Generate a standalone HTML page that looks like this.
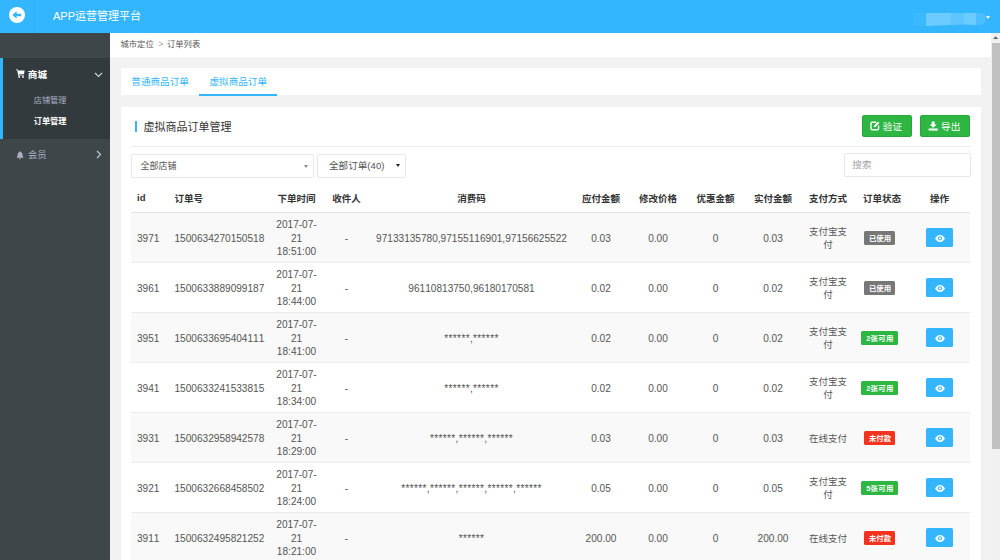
<!DOCTYPE html>
<html lang="zh-CN">
<head>
<meta charset="utf-8">
<title>APP运营管理平台</title>
<style>
*{box-sizing:border-box;margin:0;padding:0}
html,body{width:1000px;height:560px;overflow:hidden}
body{position:relative;background:#f2f2f2;font-family:"Liberation Sans","Noto Sans CJK SC",sans-serif;color:#333;font-size:10px}
.abs{position:absolute}
/* header */
#hdr{left:0;top:0;width:1000px;height:33px;background:#34b6ff}
#hdr .back{left:0;top:0;width:35px;height:33px;border-right:1px solid #30aff7}
#hdr .circle{left:9px;top:6.6px;width:16px;height:16px;border-radius:50%;background:#fff}
#hdr .title{left:53px;top:6px;font-size:11px;line-height:20px;color:#fff;white-space:nowrap}
#hdr .user{left:913px;top:12.5px;width:73px;height:13px}
#hdr .caret{left:986.3px;top:15.6px;width:0;height:0;border-left:2.5px solid transparent;border-right:2.5px solid transparent;border-top:3px solid #fff}
/* sidebar */
#side{left:0;top:33px;width:110px;height:527px;background:#3e4649}
#side .active{left:0;top:25px;width:110px;height:81px;background:#333a3d;border-left:3px solid #34b6ff}
#side .t{white-space:nowrap;line-height:12px}
/* breadcrumb */
#crumb{left:110px;top:33px;width:881px;height:24px;background:#fff;font-size:8.3px;line-height:22.6px;color:#555;white-space:nowrap}
/* tabs */
#tabs{left:121px;top:68px;width:860px;height:27px;background:#fff}
#tabs .tab{top:0;height:27px;line-height:27px;font-size:9.6px;color:#34b6ff;white-space:nowrap}
#tabs .ul{left:78px;top:26px;width:78px;height:2px;background:#34b6ff}
/* card */
#card{left:121px;top:107px;width:860px;height:460px;background:#fff}
.btn-g{top:8px;height:22px;background:#2db742;border:1px solid #28a53b;border-radius:2px;color:#fff;font-size:9.6px;line-height:21px;white-space:nowrap}
.sel{top:47px;height:24px;border:1px solid #e7e7e7;border-radius:2px;background:#fff;font-size:9px;line-height:22px;color:#555;white-space:nowrap}
/* table */
table{position:absolute;left:10px;top:81px;width:839px;border-collapse:collapse;table-layout:fixed;font-size:10.1px}
th{height:24px;padding:0 0 3.6px 0;font-weight:bold;font-size:9.5px;color:#333;text-align:center;border-bottom:1px solid #e3e3e3;white-space:nowrap;vertical-align:middle}
td{font-kerning:none;height:50px;text-align:center;vertical-align:middle;line-height:13.3px;color:#555;border-bottom:1px solid #ececec;padding:2.8px 0 0 0}
tbody tr:nth-child(odd) td{background:#f9f9f9}
th.l{text-align:left;padding-left:6px}td.l{text-align:left;padding-left:6px}
td.cn{font-size:9.5px}
td.st{letter-spacing:0.34px;padding-top:3.8px}
.bdg{display:inline-block;height:14px;line-height:16px;padding:0 4.2px 0 5.2px;top:-0.4px;overflow:hidden;border-radius:1.5px;color:#fff;font-weight:bold;font-size:7.4px;vertical-align:middle;position:relative;left:-2.5px;white-space:nowrap}
.g{background:#777}.gr{background:#2db742;letter-spacing:0.35px;padding-right:4.4px;padding-left:5.4px}.rd{background:#f5321e}
.eye{display:inline-block;width:27px;height:19px;background:#34b6ff;border-radius:1.5px;vertical-align:middle;position:relative;top:-1px;left:0px}
.eye svg{position:absolute;left:8.5px;top:6.8px}
/* scrollbar */
#sb{left:991px;top:33px;width:9px;height:527px;background:#f1f1f1}
#sb .thumb{left:1px;top:10px;width:8px;height:406px;background:#c1c1c1}
</style>
</head>
<body>
<div id="hdr" class="abs">
  <div class="back abs"></div>
  <div class="circle abs"><svg width="16" height="16" viewBox="0 0 16 16" style="display:block"><path d="M3.4 8 L7.6 4.2 L7.6 6.7 L12.2 6.7 L12.2 9.3 L7.6 9.3 L7.6 11.8 Z" fill="#34b6ff"/></svg></div>
  <div class="title abs">APP运营管理平台</div>
  <svg class="user abs" width="73" height="13" viewBox="0 0 73 13"><path d="M0 0 H13 V13 H0 Z" fill="#3bb9ff"/><path d="M13 0 H38 V12 L13 13 Z" fill="#6ccbff"/><path d="M38 0 H50.5 V11.5 L38 12 Z" fill="#5ec5ff"/><path d="M50.5 0 H63 V12 L50.5 11.5 Z" fill="#6ccbff"/><path d="M63 0 H68 Q73 0 73 5 Q73 12 66 12 H63 Z" fill="#4abeff"/></svg>
  <div class="caret abs"></div>
</div>

<div id="side" class="abs">
  <div class="active abs"></div>
  <svg class="abs" style="left:16px;top:36.4px" width="9" height="9" viewBox="0 0 9 9"><path d="M0 0.3 L1.6 0.6 L2.2 1.6 L8.6 1.6 L8 5.2 L2.6 5.6 L2.8 6.4 L8 6.4 L8 7 L2.2 7 L1.2 1.2 L0 1 Z" fill="#fff"/><circle cx="3.2" cy="8" r="0.9" fill="#fff"/><circle cx="7" cy="8" r="0.9" fill="#fff"/></svg>
  <div class="t abs" style="left:27.8px;top:35.7px;font-size:9.6px;font-weight:bold;color:#fff">商城</div>
  <svg class="abs" style="left:94px;top:39px" width="9" height="6" viewBox="0 0 9 6"><path d="M1 1 L4.5 4.5 L8 1" stroke="#d0d4d8" stroke-width="1.1" fill="none"/></svg>
  <div class="t abs" style="left:33.7px;top:62px;font-size:8.2px;color:#aab2c4">店铺管理</div>
  <div class="t abs" style="left:33.7px;top:83px;font-size:8.2px;font-weight:bold;color:#fff">订单管理</div>
  <svg class="abs" style="left:16.4px;top:117.6px" width="8.2" height="9.1" viewBox="0 0 9 10"><path d="M4.5 0.3 C5 0.3 5.2 0.7 5.1 1.1 C6.6 1.5 7.2 2.8 7.2 4.2 C7.2 5.8 7.8 6.8 8.6 7.4 L0.4 7.4 C1.2 6.8 1.8 5.8 1.8 4.2 C1.8 2.8 2.4 1.5 3.9 1.1 C3.8 0.7 4 0.3 4.5 0.3 Z M3.4 8 L5.6 8 C5.6 8.7 5.1 9.2 4.5 9.2 C3.9 9.2 3.4 8.7 3.4 8 Z" fill="#aab2c4"/></svg>
  <div class="t abs" style="left:28px;top:115.5px;font-size:9.3px;color:#aab2c4">会员</div>
  <svg class="abs" style="left:96.1px;top:117.3px" width="6" height="9" viewBox="0 0 6 9"><path d="M1 1 L4.6 4.5 L1 8" stroke="#c4cad4" stroke-width="1.1" fill="none"/></svg>
</div>

<div id="crumb" class="abs"><span class="abs" style="left:10.5px">城市定位</span><span class="abs" style="left:48.5px;color:#999">&gt;</span><span class="abs" style="left:57px">订单列表</span></div>

<div id="tabs" class="abs">
  <div class="tab abs" style="left:10.3px">普通商品订单</div>
  <div class="tab abs" style="left:88.5px">虚拟商品订单</div>
  <div class="ul abs"></div>
</div>

<div id="card" class="abs">
  <div class="abs" style="left:13.5px;top:13.5px;width:2.5px;height:11.5px;background:#34b6ff"></div>
  <div class="abs" style="left:22.5px;top:10px;font-size:11px;line-height:20px;color:#333;white-space:nowrap">虚拟商品订单管理</div>
  <div class="btn-g abs" style="left:741px;width:49.6px">
    <svg class="abs" style="left:7.4px;top:4.8px" width="10" height="10" viewBox="0 0 10 10"><path d="M6.2 1.2 L2.2 1.2 C1.5 1.2 1 1.7 1 2.4 L1 7.6 C1 8.3 1.5 8.8 2.2 8.8 L7.4 8.8 C8.1 8.8 8.6 8.3 8.6 7.6 L8.6 4.6" stroke="#fff" stroke-width="1.4" fill="none"/><path d="M3.8 6.3 L4.2 4.6 L8 0.6 L9.4 1.9 L5.5 5.9 Z" fill="#fff"/></svg>
    <span class="abs" style="left:19.8px">验证</span>
  </div>
  <div class="btn-g abs" style="left:799.3px;width:49.6px">
    <svg class="abs" style="left:6.6px;top:4.7px" width="10.4" height="10.4" viewBox="0 0 10 10"><path d="M3.6 0.5 L6.4 0.5 L6.4 3.4 L8.4 3.4 L5 6.6 L1.6 3.4 L3.6 3.4 Z" fill="#fff"/><rect x="0.6" y="7.2" width="8.8" height="2" fill="#fff"/></svg>
    <span class="abs" style="left:19.8px">导出</span>
  </div>
  <div class="abs" style="left:10px;top:39px;width:839.5px;height:1px;background:#ededed"></div>
  <div class="sel abs" style="left:10px;width:183px"><span class="abs" style="left:8.5px">全部店铺</span><i class="abs" style="left:172px;top:9.8px;border-left:2.3px solid transparent;border-right:2.3px solid transparent;border-top:3px solid #888"></i></div>
  <div class="sel abs" style="left:196px;width:89px"><span class="abs" style="left:11px;font-size:9.6px">全部订单(40)</span><i class="abs" style="left:78px;top:8.6px;border-left:2.1px solid transparent;border-right:2.1px solid transparent;border-top:3.8px solid #222"></i></div>
  <div class="sel abs" style="left:723px;width:126.5px;top:46.4px;height:23.2px"><span class="abs" style="left:7.3px;font-size:9.6px;color:#a5a5a5">搜索</span></div>

  <table>
    <colgroup><col style="width:37.5px"><col style="width:102.5px"><col style="width:51px"><col style="width:49px"><col style="width:201px"><col style="width:58px"><col style="width:56px"><col style="width:59px"><col style="width:56px"><col style="width:54px"><col style="width:54px"><col style="width:61px"></colgroup>
    <thead><tr><th class="l">id</th><th class="l">订单号</th><th>下单时间</th><th>收件人</th><th>消费码</th><th>应付金额</th><th>修改价格</th><th>优惠金额</th><th>实付金额</th><th>支付方式</th><th>订单状态</th><th>操作</th></tr></thead>
    <tbody>
      <tr><td class="l">3971</td><td class="l">1500634270150518</td><td>2017-07-<br>21<br>18:51:00</td><td>-</td><td>97133135780,97155116901,97156625522</td><td>0.03</td><td>0.00</td><td>0</td><td>0.03</td><td class="cn">支付宝支<br>付</td><td><span class="bdg g">已使用</span></td><td><span class="eye"><svg width="10" height="7" viewBox="0 0 10 7"><path d="M0 3.5 C1.5 1 3.2 0 5 0 C6.8 0 8.5 1 10 3.5 C8.5 6 6.8 7 5 7 C3.2 7 1.5 6 0 3.5 Z" fill="#fff"/><circle cx="5" cy="3.3" r="2.1" fill="#34b6ff"/><circle cx="5" cy="3.3" r="1.1" fill="#fff"/></svg></span></td></tr>
      <tr><td class="l">3961</td><td class="l">1500633889099187</td><td>2017-07-<br>21<br>18:44:00</td><td>-</td><td>96110813750,96180170581</td><td>0.02</td><td>0.00</td><td>0</td><td>0.02</td><td class="cn">支付宝支<br>付</td><td><span class="bdg g">已使用</span></td><td><span class="eye"><svg width="10" height="7" viewBox="0 0 10 7"><path d="M0 3.5 C1.5 1 3.2 0 5 0 C6.8 0 8.5 1 10 3.5 C8.5 6 6.8 7 5 7 C3.2 7 1.5 6 0 3.5 Z" fill="#fff"/><circle cx="5" cy="3.3" r="2.1" fill="#34b6ff"/><circle cx="5" cy="3.3" r="1.1" fill="#fff"/></svg></span></td></tr>
      <tr><td class="l">3951</td><td class="l">1500633695404111</td><td>2017-07-<br>21<br>18:41:00</td><td>-</td><td class="st">******,******</td><td>0.02</td><td>0.00</td><td>0</td><td>0.02</td><td class="cn">支付宝支<br>付</td><td><span class="bdg gr">2张可用</span></td><td><span class="eye"><svg width="10" height="7" viewBox="0 0 10 7"><path d="M0 3.5 C1.5 1 3.2 0 5 0 C6.8 0 8.5 1 10 3.5 C8.5 6 6.8 7 5 7 C3.2 7 1.5 6 0 3.5 Z" fill="#fff"/><circle cx="5" cy="3.3" r="2.1" fill="#34b6ff"/><circle cx="5" cy="3.3" r="1.1" fill="#fff"/></svg></span></td></tr>
      <tr><td class="l">3941</td><td class="l">1500633241533815</td><td>2017-07-<br>21<br>18:34:00</td><td>-</td><td class="st">******,******</td><td>0.02</td><td>0.00</td><td>0</td><td>0.02</td><td class="cn">支付宝支<br>付</td><td><span class="bdg gr">2张可用</span></td><td><span class="eye"><svg width="10" height="7" viewBox="0 0 10 7"><path d="M0 3.5 C1.5 1 3.2 0 5 0 C6.8 0 8.5 1 10 3.5 C8.5 6 6.8 7 5 7 C3.2 7 1.5 6 0 3.5 Z" fill="#fff"/><circle cx="5" cy="3.3" r="2.1" fill="#34b6ff"/><circle cx="5" cy="3.3" r="1.1" fill="#fff"/></svg></span></td></tr>
      <tr><td class="l">3931</td><td class="l">1500632958942578</td><td>2017-07-<br>21<br>18:29:00</td><td>-</td><td class="st">******,******,******</td><td>0.03</td><td>0.00</td><td>0</td><td>0.03</td><td class="cn">在线支付</td><td><span class="bdg rd">未付款</span></td><td><span class="eye"><svg width="10" height="7" viewBox="0 0 10 7"><path d="M0 3.5 C1.5 1 3.2 0 5 0 C6.8 0 8.5 1 10 3.5 C8.5 6 6.8 7 5 7 C3.2 7 1.5 6 0 3.5 Z" fill="#fff"/><circle cx="5" cy="3.3" r="2.1" fill="#34b6ff"/><circle cx="5" cy="3.3" r="1.1" fill="#fff"/></svg></span></td></tr>
      <tr><td class="l">3921</td><td class="l">1500632668458502</td><td>2017-07-<br>21<br>18:24:00</td><td>-</td><td class="st">******,******,******,******,******</td><td>0.05</td><td>0.00</td><td>0</td><td>0.05</td><td class="cn">支付宝支<br>付</td><td><span class="bdg gr">5张可用</span></td><td><span class="eye"><svg width="10" height="7" viewBox="0 0 10 7"><path d="M0 3.5 C1.5 1 3.2 0 5 0 C6.8 0 8.5 1 10 3.5 C8.5 6 6.8 7 5 7 C3.2 7 1.5 6 0 3.5 Z" fill="#fff"/><circle cx="5" cy="3.3" r="2.1" fill="#34b6ff"/><circle cx="5" cy="3.3" r="1.1" fill="#fff"/></svg></span></td></tr>
      <tr><td class="l">3911</td><td class="l">1500632495821252</td><td>2017-07-<br>21<br>18:21:00</td><td>-</td><td class="st">******</td><td>200.00</td><td>0.00</td><td>0</td><td>200.00</td><td class="cn">在线支付</td><td><span class="bdg rd">未付款</span></td><td><span class="eye"><svg width="10" height="7" viewBox="0 0 10 7"><path d="M0 3.5 C1.5 1 3.2 0 5 0 C6.8 0 8.5 1 10 3.5 C8.5 6 6.8 7 5 7 C3.2 7 1.5 6 0 3.5 Z" fill="#fff"/><circle cx="5" cy="3.3" r="2.1" fill="#34b6ff"/><circle cx="5" cy="3.3" r="1.1" fill="#fff"/></svg></span></td></tr>
    </tbody>
  </table>
</div>

<div id="sb" class="abs">
  <svg class="abs" style="left:2.3px;top:3.2px" width="5.4" height="3.4" viewBox="0 0 6 4"><path d="M0 3.6 L3 0.4 L6 3.6 Z" fill="#606060"/></svg>
  <div class="thumb abs"></div>
</div>
</body>
</html>
